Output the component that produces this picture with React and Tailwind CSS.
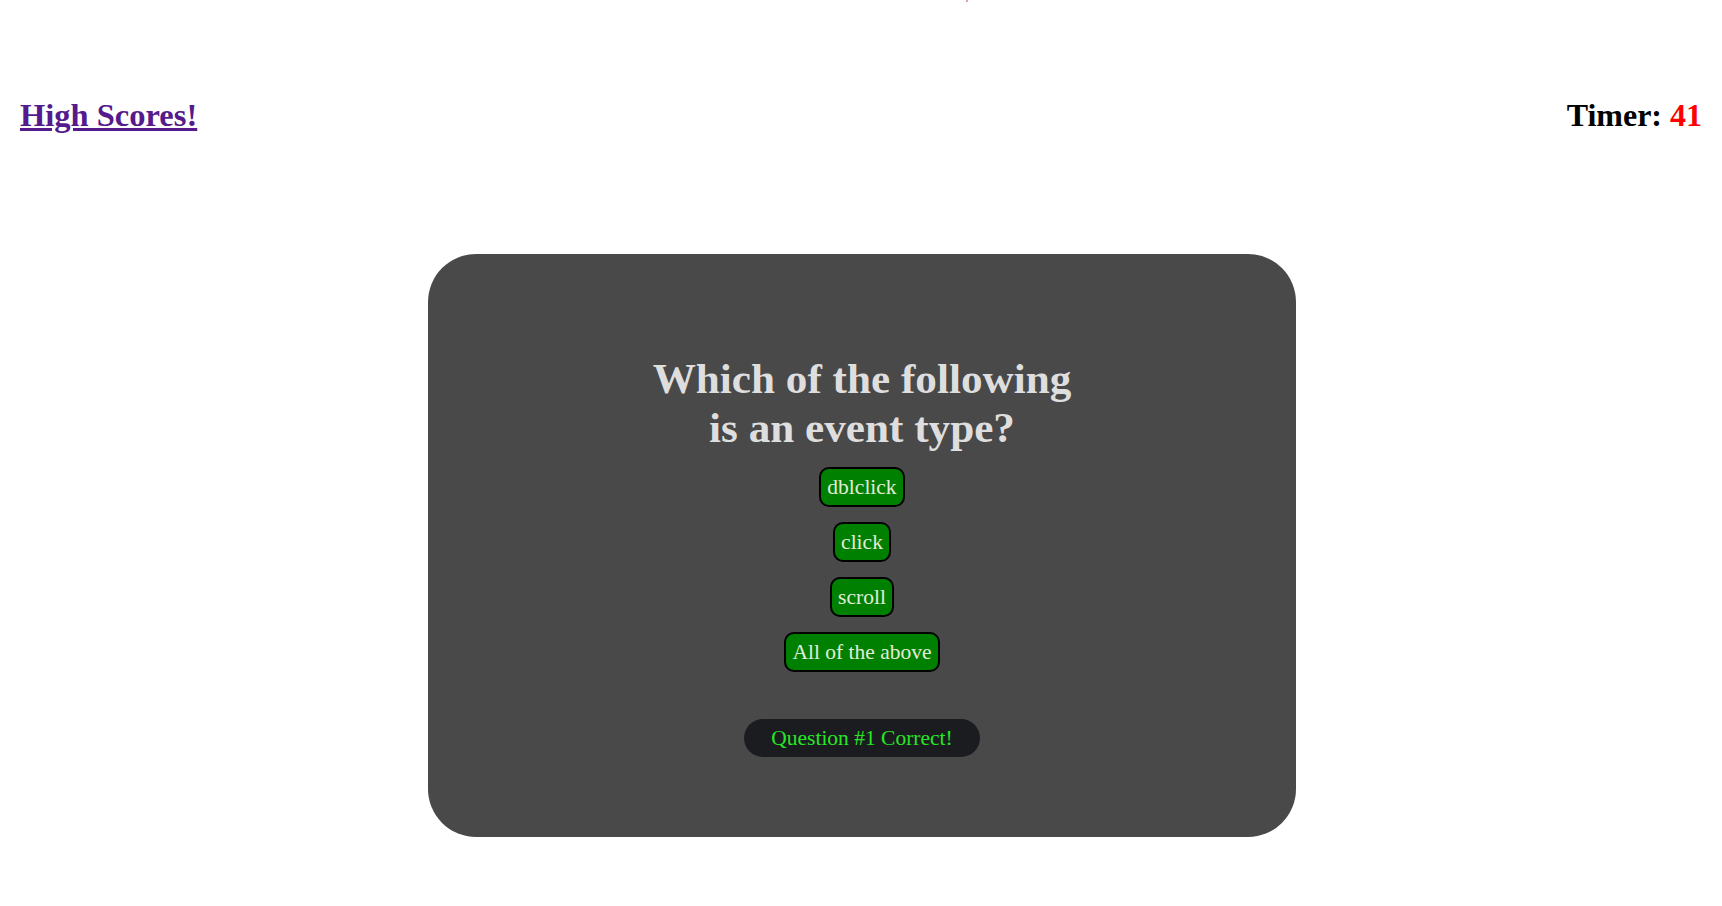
const serif = { fontFamily: '"Liberation Serif", "Times New Roman", serif' }

const choices = ['dblclick', 'click', 'scroll', 'All of the above']

export default function App() {
  return (
    <div className="min-h-[906px] bg-white" style={serif}>
      {/* stray marker at the very top */}
      <div className="h-[3px] pl-[966px]">
        <div className="w-[2px] h-[2px] bg-[#e8a0a0]" />
      </div>

      {/* Header */}
      <header className="mt-[94px] px-5 flex items-center justify-between text-[32px] font-bold leading-[37px]">
        <a href="#" className="text-[#551a8b] underline text-[32.5px]">High Scores!</a>
        <div className="text-black">
          Timer: <span className="text-[#ff0000]">41</span>
        </div>
      </header>

      {/* Quiz card */}
      <main className="mt-[120px] pl-[2px] flex justify-center">
        <div className="w-[868px] h-[583px] bg-[#494949] rounded-[48px] pt-[100px] flex flex-col items-center">
          <h1 className="max-w-[440px] text-center text-[43.2px] leading-[49px] font-bold text-[#dedede]">
            Which of the following is an event type?
          </h1>
          <div className="mt-[15px] flex flex-col items-center gap-[15px]">
            {choices.map(c => (
              <button
                key={c}
                className="h-[40px] px-[6.5px] border-2 border-black rounded-[10px] bg-[#008000] text-[#e2ecd8] text-[21.5px] leading-[24px]"
                style={serif}
              >
                {c}
              </button>
            ))}
          </div>
          <div className="mt-[47px] h-[38px] px-[27px] flex items-center rounded-full bg-[#1b1c1f] text-[#26e626] text-[21.5px] leading-[24px]">
            Question #1 Correct!
          </div>
        </div>
      </main>
    </div>
  )
}
